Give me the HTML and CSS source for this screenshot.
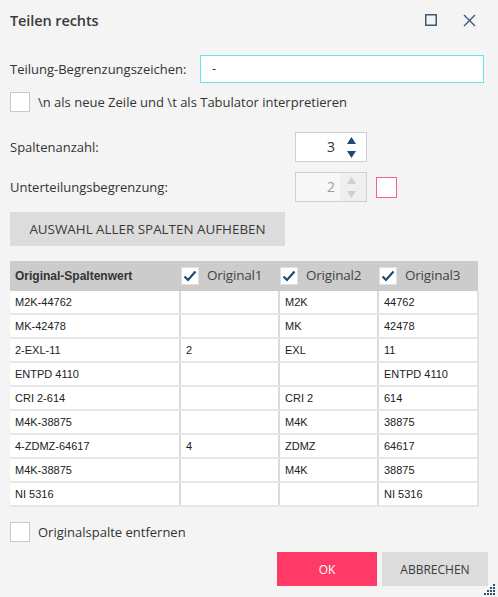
FILE: index.html
```html
<!DOCTYPE html>
<html lang="de">
<head>
<meta charset="utf-8">
<title>Teilen rechts</title>
<link rel="stylesheet" href="styles.css">
</head>
<body>
<div class="dialog">
  <div class="titlebar">
    <div class="title">Teilen rechts</div>
    <div class="win-icons">
      <svg class="ico" width="12" height="12" viewBox="0 0 12 12"><rect x="0.75" y="0.75" width="10.5" height="10.5" fill="none" stroke="#3b5b7b" stroke-width="1.5"/></svg>
      <svg class="ico close" width="13" height="13" viewBox="0 0 13 13"><path d="M1 1L12 12M12 1L1 12" stroke="#3b5b7b" stroke-width="1.4" fill="none"/></svg>
    </div>
  </div>

  <div class="row row-delim">
    <label class="lbl">Teilung-Begrenzungszeichen:</label>
    <div class="text-input">-</div>
  </div>

  <div class="row row-check">
    <span class="cb"></span>
    <span class="cb-label">\n als neue Zeile und \t als Tabulator interpretieren</span>
  </div>

  <div class="row row-spin">
    <label class="lbl lbl-spin">Spaltenanzahl:</label>
    <div class="spin">
      <span class="spin-val">3</span>
      <span class="spin-btns">
        <svg width="9" height="7" viewBox="0 0 9 7"><path d="M4.5 0L9 7H0Z" fill="#1f4a73"/></svg>
        <svg width="9" height="7" viewBox="0 0 9 7"><path d="M0 0H9L4.5 7Z" fill="#1f4a73"/></svg>
      </span>
    </div>
  </div>

  <div class="row row-spin2">
    <label class="lbl lbl-spin">Unterteilungsbegrenzung:</label>
    <div class="spin disabled">
      <span class="spin-val">2</span>
      <span class="spin-btns">
        <svg width="9" height="7" viewBox="0 0 9 7"><path d="M4.5 0L9 7H0Z" fill="#cfcfcf"/></svg>
        <svg width="9" height="7" viewBox="0 0 9 7"><path d="M0 0H9L4.5 7Z" fill="#cfcfcf"/></svg>
      </span>
    </div>
    <span class="err-box"></span>
  </div>

  <button class="btn-gray btn-wide">AUSWAHL ALLER SPALTEN AUFHEBEN</button>

  <table class="grid">
    <thead>
      <tr>
        <th class="c1">Original-Spaltenwert</th>
        <th class="hc"><span class="hcb"><svg width="14" height="12" viewBox="0 0 14 12"><path d="M1.5 6.5L5 10L12.5 1.5" stroke="#1f4a73" stroke-width="2.2" fill="none"/></svg></span>Original1</th>
        <th class="hc"><span class="hcb"><svg width="14" height="12" viewBox="0 0 14 12"><path d="M1.5 6.5L5 10L12.5 1.5" stroke="#1f4a73" stroke-width="2.2" fill="none"/></svg></span>Original2</th>
        <th class="hc"><span class="hcb"><svg width="14" height="12" viewBox="0 0 14 12"><path d="M1.5 6.5L5 10L12.5 1.5" stroke="#1f4a73" stroke-width="2.2" fill="none"/></svg></span>Original3</th>
      </tr>
    </thead>
    <tbody>
      <tr><td>M2K-44762</td><td></td><td>M2K</td><td>44762</td></tr>
      <tr><td>MK-42478</td><td></td><td>MK</td><td>42478</td></tr>
      <tr><td>2-EXL-11</td><td>2</td><td>EXL</td><td>11</td></tr>
      <tr><td>ENTPD 4110</td><td></td><td></td><td>ENTPD 4110</td></tr>
      <tr><td>CRI 2-614</td><td></td><td>CRI 2</td><td>614</td></tr>
      <tr><td>M4K-38875</td><td></td><td>M4K</td><td>38875</td></tr>
      <tr><td>4-ZDMZ-64617</td><td>4</td><td>ZDMZ</td><td>64617</td></tr>
      <tr><td>M4K-38875</td><td></td><td>M4K</td><td>38875</td></tr>
      <tr><td>NI 5316</td><td></td><td></td><td>NI 5316</td></tr>
    </tbody>
  </table>

  <div class="row row-check2">
    <span class="cb"></span>
    <span class="cb-label">Originalspalte entfernen</span>
  </div>

  <div class="actions">
    <button class="btn-ok">OK</button>
    <button class="btn-gray btn-cancel">ABBRECHEN</button>
  </div>

  <svg class="grip" width="12" height="12" viewBox="0 0 12 12">
    <g fill="#2f5273">
      <rect x="9" y="0" width="2" height="2"/>
      <rect x="6" y="3" width="2" height="2"/><rect x="9" y="3" width="2" height="2"/>
      <rect x="3" y="6" width="2" height="2"/><rect x="6" y="6" width="2" height="2"/><rect x="9" y="6" width="2" height="2"/>
      <rect x="0" y="9" width="2" height="2"/><rect x="3" y="9" width="2" height="2"/><rect x="6" y="9" width="2" height="2"/><rect x="9" y="9" width="2" height="2"/>
    </g>
  </svg>
</div>
</body>
</html>
```

FILE: styles.css
```css
html, body {
  margin: 0;
  padding: 0;
  background: #f4f4f4;
}
body {
  font-family: "Open Sans", "Noto Sans", sans-serif;
  color: #333;
}
.dialog {
  position: relative;
  width: 498px;
  height: 597px;
  box-sizing: border-box;
  padding: 0 10px;
  display: flex;
  flex-direction: column;
  background: #f4f4f4;
}
.titlebar {
  height: 40px;
  display: flex;
  align-items: center;
  justify-content: space-between;
}
.title {
  font-size: 14.5px;
  font-weight: 600;
  color: #3a3a3a;
  letter-spacing: -0.1px;
}
.win-icons {
  display: flex;
  align-items: center;
  gap: 26px;
  padding-right: 12px;
}
.row {
  display: flex;
  align-items: center;
}
.lbl {
  font-size: 13px;
  color: #333;
}
.row-delim {
  margin-top: 15px;
  height: 28px;
}
.row-delim .lbl {
  width: 190px;
}
.text-input {
  flex: 1;
  height: 28px;
  box-sizing: border-box;
  margin-right: 4px;
  background: #fff;
  border: 1px solid #66e3f5;
  font-size: 13px;
  padding-left: 11px;
  line-height: 25px;
  color: #333;
}
.row-check {
  margin-top: 9px;
  height: 20px;
}
.cb {
  width: 20px;
  height: 20px;
  box-sizing: border-box;
  border: 1px solid #c8c8c8;
  background: #fff;
  flex: none;
}
.cb-label {
  margin-left: 8px;
  font-size: 13px;
  color: #333;
}
.row-spin {
  margin-top: 20px;
  height: 30px;
}
.row-spin2 {
  margin-top: 10px;
  height: 30px;
}
.lbl-spin {
  width: 285px;
}
.spin {
  width: 72px;
  height: 30px;
  box-sizing: border-box;
  border: 1px solid #cfcfcf;
  background: #fff;
  display: flex;
  align-items: stretch;
}
.spin-val {
  flex: 1;
  text-align: right;
  font-size: 14px;
  line-height: 28px;
  color: #333;
  padding-right: 5px;
}
.spin-btns {
  width: 22px;
  display: flex;
  flex-direction: column;
  align-items: center;
  justify-content: center;
  gap: 7px;
  padding-right: 4px;
}
.spin.disabled {
  background: #f7f7f7;
}
.spin.disabled .spin-val {
  color: #a0a0a0;
}
.spin.disabled .spin-btns {
  background: #efefef;
}
.err-box {
  width: 21px;
  height: 21px;
  box-sizing: border-box;
  border: 1px solid #f0638a;
  background: #fff;
  margin-left: 9px;
}
.btn-gray {
  border: none;
  background: #dcdcdc;
  color: #3a3a3a;
  font-family: "Open Sans", "Noto Sans", sans-serif;
  font-size: 12px;
  padding: 0;
}
.btn-wide {
  margin-top: 10px;
  width: 275px;
  height: 34px;
  font-size: 13.4px;
}
.grid {
  margin-top: 15px;
  width: 467px;
  border-collapse: collapse;
  table-layout: fixed;
  font-family: "Liberation Sans", Arial, sans-serif;
  font-size: 11px;
  color: #222;
}
.grid th {
  background: #cccccc;
  height: 30px;
  padding: 0;
  text-align: left;
  font-weight: normal;
}
.grid th.c1 {
  width: 165px;
  padding-left: 5px;
  font-weight: bold;
  color: #333;
  font-size: 12px;
}
.grid th.hc {
  width: 99px;
  font-family: "Open Sans", "Noto Sans", sans-serif;
  font-size: 13.5px;
  color: #444;
  letter-spacing: -0.2px;
}
.grid th.hc:last-child {
  width: 100px;
}
.hcb {
  display: inline-flex;
  align-items: center;
  justify-content: center;
  width: 18px;
  height: 18px;
  box-sizing: border-box;
  border: 1px solid #e0e0e0;
  background: #fff;
  vertical-align: middle;
  margin: 0 8px 0 1px;
  position: relative;
  top: -1px;
}
.grid td {
  height: 22px;
  padding: 0 0 0 5px;
  background: #fff;
  border-bottom: 2px solid #e6e6e6;
  border-right: 2px solid #dadada;
  white-space: nowrap;
  overflow: hidden;
}
.grid td:last-child {
  border-right: 2px solid #e2e2e2;
}
.row-check2 {
  margin-top: 15px;
  height: 20px;
}
.actions {
  margin-top: 10px;
  display: flex;
  justify-content: flex-end;
  gap: 5px;
}
.btn-ok {
  width: 100px;
  height: 34px;
  border: none;
  background: #ff3a66;
  color: #fff;
  font-family: "Open Sans", "Noto Sans", sans-serif;
  font-size: 12px;
  padding: 0;
}
.btn-cancel {
  width: 106px;
  height: 34px;
}
.grip {
  position: absolute;
  right: 2px;
  bottom: 1px;
}
```
